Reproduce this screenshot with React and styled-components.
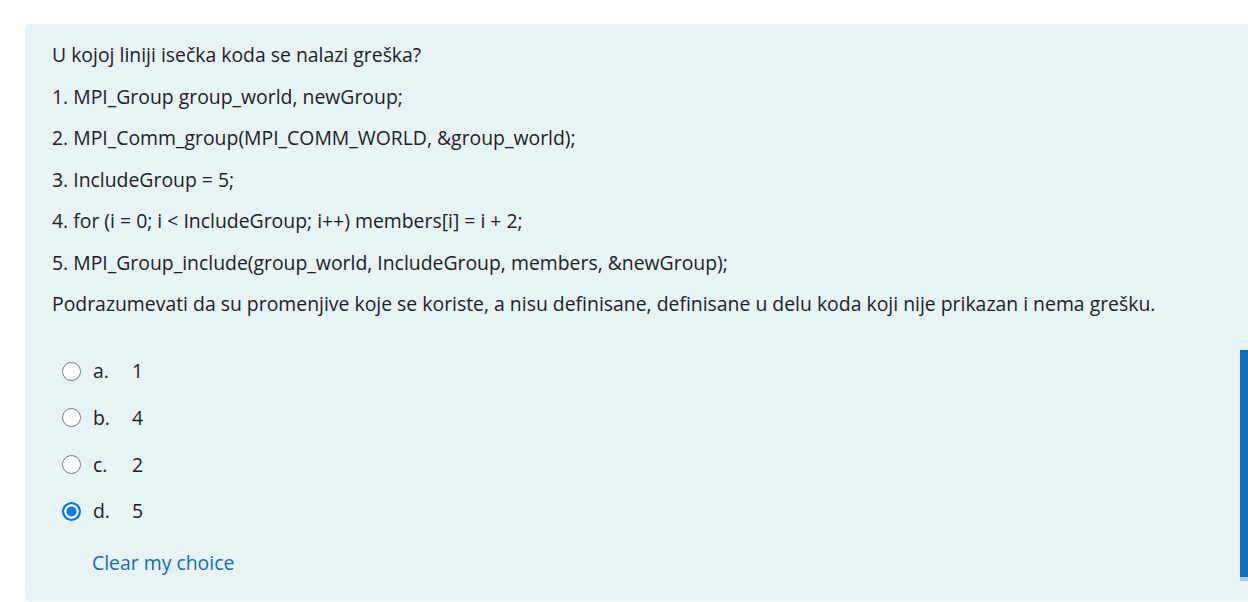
import React from 'react'
import styled, { createGlobalStyle } from 'styled-components'

const GlobalStyle = createGlobalStyle`
  html, body {
    margin: 0;
    padding: 0;
    background: #ffffff;
    overflow: hidden;
  }
  body {
    font-family: "Open Sans", "Noto Sans", sans-serif;
    color: #1d2125;
  }
`

const answers = [
  { letter: 'a.', value: '1', checked: false },
  { letter: 'b.', value: '4', checked: false },
  { letter: 'c.', value: '2', checked: false },
  { letter: 'd.', value: '5', checked: true },
]

const lines = [
  'U kojoj liniji isečka koda se nalazi greška?',
  '1. MPI_Group group_world, newGroup;',
  '2. MPI_Comm_group(MPI_COMM_WORLD, &group_world);',
  '3. IncludeGroup = 5;',
  '4. for (i = 0; i < IncludeGroup; i++) members[i] = i + 2;',
  '5. MPI_Group_include(group_world, IncludeGroup, members, &newGroup);',
  'Podrazumevati da su promenjive koje se koriste, a nisu definisane, definisane u delu koda koji nije prikazan i nema grešku.',
]

function App() {
  return (
    <Page>
      <GlobalStyle />
      <Panel>
        <QText>
          {lines.map((l, i) => (
            <p key={i}>{l}</p>
          ))}
        </QText>
        <Answers>
          {answers.map((a) => (
            <Row key={a.letter}>
              <Radio $checked={a.checked} />
              <Letter>{a.letter}</Letter>
              <Value>{a.value}</Value>
            </Row>
          ))}
        </Answers>
        <ClearLink href="#">Clear my choice</ClearLink>
        <SideBar />
      </Panel>
    </Page>
  )
}

export default App

const Page = styled.div`
  padding: 24px 0 0 25px;
  width: 1248px;
  box-sizing: border-box;
  overflow: hidden;
`

const Panel = styled.div`
  position: relative;
  width: calc(100% + 20px);
  height: 577px;
  box-sizing: border-box;
  background: #e7f3f5;
  border-radius: 5px;
  padding: 17px 0 0 27px;
  font-size: 19.4px;
`

const QText = styled.div`
  p {
    margin: 0 0 13.5px 0;
    line-height: 28px;
    white-space: nowrap;
  }
`

const Answers = styled.div`
  margin-top: 30px;
  padding-left: 10px;
`

const Row = styled.div`
  display: flex;
  align-items: center;
  height: 46.67px;
`

const Radio = styled.span`
  width: 19px;
  height: 19px;
  box-sizing: border-box;
  border-radius: 50%;
  margin-right: 12px;
  flex-shrink: 0;
  background: ${(p) => (p.$checked ? '#0075ff' : '#ffffff')};
  border: ${(p) => (p.$checked ? '2px solid #0075ff' : '1.5px solid #7a7a7a')};
  box-shadow: ${(p) => (p.$checked ? 'inset 0 0 0 2.5px #ffffff' : 'none')};
`

const Letter = styled.span`
  width: 39px;
  line-height: 28px;
`

const Value = styled.span`
  line-height: 28px;
`

const ClearLink = styled.a`
  display: inline-block;
  margin: 14px 0 0 40px;
  line-height: 28px;
  color: #0f6cbf;
  text-decoration: none;
`

const SideBar = styled.div`
  position: absolute;
  top: 326px;
  right: 20px;
  width: 8px;
  height: 227px;
  background: #0f6cbf;
  border-bottom: 4px solid #a9c9ea;
`
